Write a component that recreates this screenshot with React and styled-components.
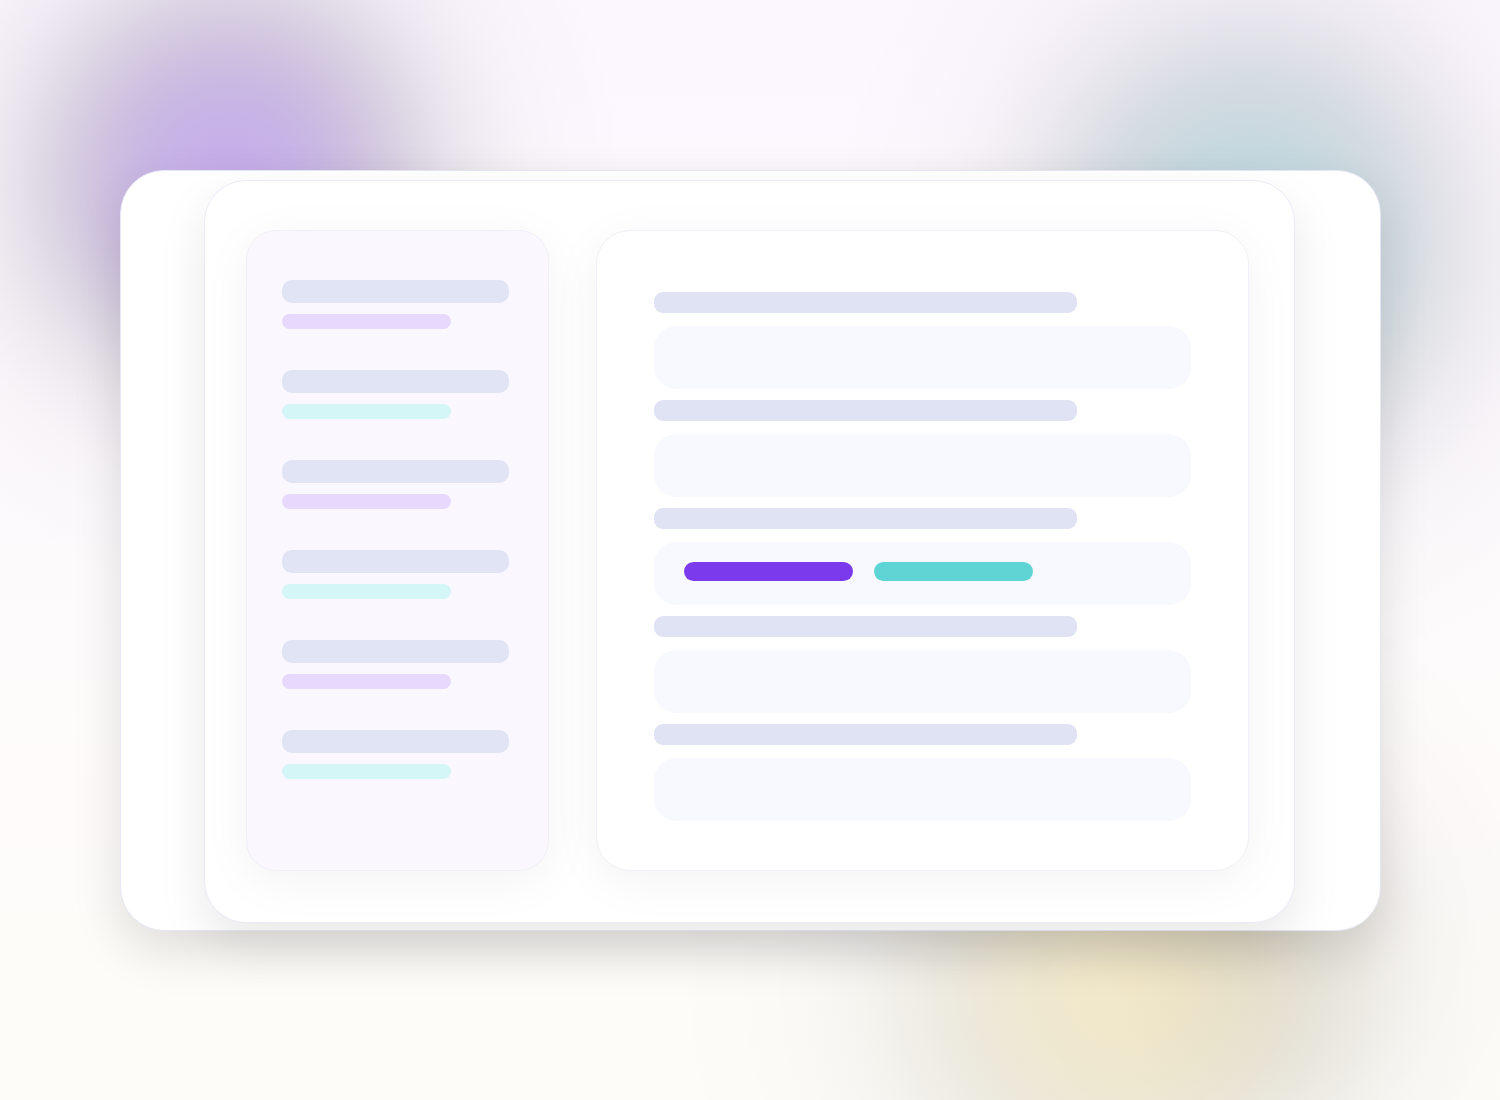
import React from 'react';
import styled, { createGlobalStyle } from 'styled-components';

const GlobalStyle = createGlobalStyle`
  * {
    box-sizing: border-box;
  }

  body {
    margin: 0;
  }
`;

// Soft glow: a wide S-curve falloff, the colour darkens towards grey as it fades out
const glow = ({ x, y, rx, ry, color, alpha }) => {
  const stops = [];
  for (let i = 0; i <= 25; i += 1) {
    const t = i / 25;
    const b = i === 25 ? 0 : 0.92 / (1 + Math.exp((t - 0.4) / 0.125));
    const rgb = color.map((c) => Math.round(c * b)).join(', ');
    stops.push(`rgba(${rgb}, ${(alpha * b).toFixed(4)}) ${i * 4}%`);
  }
  return `radial-gradient(${rx}px ${ry}px at ${x} ${y}, ${stops.join(', ')})`;
};

const glows = [
  glow({ x: '230px', y: '185px', rx: 395, ry: 410, color: [124, 58, 230], alpha: 0.43 }),
  glow({ x: 'calc(100% - 250px)', y: '245px', rx: 420, ry: 440, color: [30, 155, 165], alpha: 0.32 }),
  glow({ x: 'calc(100% - 230px)', y: '920px', rx: 300, ry: 330, color: [90, 70, 40], alpha: 0.06 }),
  glow({ x: 'calc(100% - 370px)', y: '985px', rx: 450, ry: 440, color: [238, 190, 40], alpha: 0.24 }),
].join(', ');

const Page = styled.main`
  min-height: 100vh;
  padding: 170px 119px 169px 120px;
  background: ${glows}, linear-gradient(180deg, #fcf7ff 0%, #fdfafd 45%, #fefbfb 66%, #fdfcf8 90%);
`;

const Card = styled.div`
  padding: 9px 85px 7px 83px;
  background: #ffffff;
  border: 1px solid #e6e7f6;
  border-radius: 44px;
  box-shadow: 0 20px 50px rgba(0, 0, 0, 0.12);
`;

const Board = styled.div`
  display: flex;
  gap: 47px;
  padding: 49px 45px 51px 41px;
  background: #ffffff;
  border: 1px solid #ebebf8;
  border-radius: 42px;
  box-shadow: 0 20px 50px rgba(0, 0, 0, 0.09);
`;

const Panel = styled.section`
  display: flex;
  flex-direction: column;
  border: 1px solid #f0f0f6;
  box-shadow: 0 10px 50px rgba(0, 0, 0, 0.05);
`;

const Sidebar = styled(Panel)`
  flex: 0 0 303px;
  gap: 41px;
  min-height: 641px;
  padding: 49px 39px 49px 35px;
  background: #faf7ff;
  border-radius: 30px;
`;

const Content = styled(Panel)`
  flex: 1;
  gap: 11px;
  padding: 61px 57px 49px;
  background: #ffffff;
  border-radius: 34px;
`;

const SidebarItem = styled.div`
  display: flex;
  flex-direction: column;
  gap: 11px;
`;

const ItemTitle = styled.div`
  height: 23px;
  background: #e0e4f4;
  border-radius: 10px;
`;

const ItemTag = styled.div`
  width: 169px;
  height: 15px;
  background: ${({ $color }) => $color};
  border-radius: 8px;
`;

const Field = styled.div`
  display: flex;
  flex-direction: column;
  gap: 13px;
`;

const FieldLabel = styled.div`
  width: 423px;
  max-width: 100%;
  height: 21px;
  background: #e0e3f4;
  border-radius: 9px;
`;

const FieldBox = styled.div`
  display: flex;
  align-items: center;
  gap: 21px;
  height: 63px;
  padding: 0 30px 4px;
  background: #f8f9ff;
  border-radius: 22px;
`;

const Pill = styled.div`
  width: ${({ $width }) => $width}px;
  height: 19px;
  background: ${({ $color }) => $color};
  border-radius: 10px;
`;

const tagColors = ['#e7d9fd', '#d4f6f6'];
const sidebarItems = [0, 1, 2, 3, 4, 5];
const fields = [
  { id: 1 },
  { id: 2 },
  { id: 3, hasPills: true },
  { id: 4 },
  { id: 5 },
];

function App() {
  return (
    <>
      <GlobalStyle />
      <Page>
        <Card>
          <Board>
            <Sidebar>
              {sidebarItems.map((item) => (
                <SidebarItem key={item}>
                  <ItemTitle />
                  <ItemTag $color={tagColors[item % 2]} />
                </SidebarItem>
              ))}
            </Sidebar>
            <Content>
              {fields.map(({ id, hasPills }) => (
                <Field key={id}>
                  <FieldLabel />
                  <FieldBox>
                    {hasPills && (
                      <>
                        <Pill $width={169} $color="#7c3aed" />
                        <Pill $width={159} $color="#5fd4d4" />
                      </>
                    )}
                  </FieldBox>
                </Field>
              ))}
            </Content>
          </Board>
        </Card>
      </Page>
    </>
  );
}

export default App;
